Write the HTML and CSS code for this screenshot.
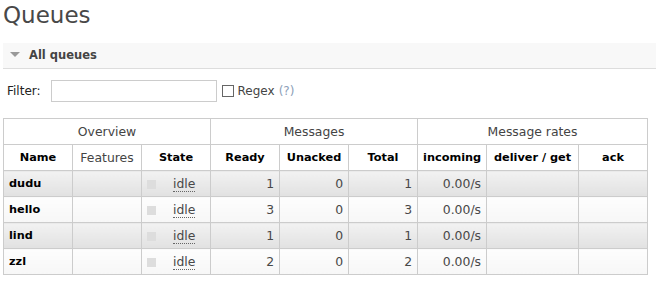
FILE: index.html
```html
<!DOCTYPE html>
<html lang="en">
<head>
    <meta charset="UTF-8">
    <title>Queues</title>
    <link rel="stylesheet" href="styles.css">
</head>
<body>
    <div class="page">
        <h1>Queues</h1>
        <div class="section-head"><span class="arrow"></span>All queues</div>
        <div class="filter-row">
            <label for="filter">Filter:</label>
            <input type="text" id="filter" class="filter-input">
            <span class="regex"><span class="check"></span>Regex <span class="help">(?)</span></span>
        </div>
        <table class="list">
            <colgroup>
                <col class="c-std"><col class="c-std"><col class="c-std">
                <col class="c-std"><col class="c-std"><col class="c-std">
                <col class="c-std"><col class="c-wide"><col class="c-std">
            </colgroup>
            <thead>
                <tr class="group">
                    <th colspan="3">Overview</th>
                    <th colspan="3">Messages</th>
                    <th colspan="3">Message rates</th>
                </tr>
                <tr class="cols">
                    <th>Name</th>
                    <th class="plain">Features</th>
                    <th>State</th>
                    <th>Ready</th>
                    <th>Unacked</th>
                    <th>Total</th>
                    <th>incoming</th>
                    <th>deliver / get</th>
                    <th>ack</th>
                </tr>
            </thead>
            <tbody id="rows"></tbody>
        </table>
    </div>
    <script>
        let queues = [
            { name: "dudu", ready: 1, unacked: 0, total: 1 },
            { name: "hello", ready: 3, unacked: 0, total: 3 },
            { name: "lind", ready: 1, unacked: 0, total: 1 },
            { name: "zzl", ready: 2, unacked: 0, total: 2 }
        ];

        let tbody = document.getElementById("rows");
        queues.forEach((q, i) => {
            let tr = document.createElement("tr");
            tr.className = i % 2 == 0 ? "alt1" : "alt2";
            tr.innerHTML = `
                <td class="name">${q.name}</td>
                <td></td>
                <td class="state"><span class="status-grey"></span><abbr>idle</abbr></td>
                <td class="num">${q.ready}</td>
                <td class="num">${q.unacked}</td>
                <td class="num">${q.total}</td>
                <td class="num">0.00/s</td>
                <td></td>
                <td></td>
            `;
            tbody.appendChild(tr);
        });
    </script>
</body>
</html>
```

FILE: styles.css
```css
body { margin: 0; font-family: "DejaVu Sans", Verdana, sans-serif; font-size: 12px; color: #484848; background: #fff; }
.page { padding-left: 3px; }
h1 { margin: 0; font-size: 23px; line-height: 30px; font-weight: normal; color: #484848; }
.section-head { margin-top: 13px; height: 25px; line-height: 25px; background: #f8f8f8; border-bottom: 1px solid #ddd; font-size: 11.5px; font-weight: bold; color: #444; }
.section-head .arrow { display: inline-block; width: 0; height: 0; margin: 0 9px 0 7px; border-left: 5px solid transparent; border-right: 5px solid transparent; border-top: 5px solid #999; vertical-align: 2px; }
.filter-row { display: flex; align-items: center; margin-top: 11px; height: 22px; padding-left: 4px; }
.filter-row label { color: #222; margin-right: 10px; }
.filter-input { width: 162px; height: 18px; margin: 0; padding: 1px; border: 1px solid #ccc; font-family: inherit; }
.regex { display: flex; align-items: center; margin-left: 5px; color: #444; }
.check { display: inline-block; width: 10px; height: 10px; border: 1px solid #666; margin-right: 4px; background: #fff; }
.help { color: #8ca0b8; margin-left: 4px; }
.list { margin-top: 16px; border-collapse: collapse; table-layout: fixed; width: 645px; }
.c-std { width: 69px; }
.c-wide { width: 92px; }
.list th, .list td { height: 25px; padding: 0 5px; border: 1px solid #ccc; white-space: nowrap; }
.list th { font-size: 11.3px; font-weight: bold; color: #000; text-align: center; background: #fff; }
.list tr.group th, .list th.plain { font-size: 12.4px; font-weight: normal; color: #444; }
.list td { font-size: 12.4px; color: #484848; }
.list td.name { font-size: 11.3px; font-weight: bold; color: #000; }
.list td.num { text-align: right; }
.list tr.alt1 td { background: linear-gradient(#f2f2f2, #e1e1e1); }
.list tr.alt2 td { background: linear-gradient(#fdfdfd, #f7f7f7); }
.status-grey { display: inline-block; width: 9px; height: 9px; background: #ddd; margin-right: 17px; vertical-align: -1px; }
abbr { text-decoration: none; border-bottom: 1px dotted #666; }
```
